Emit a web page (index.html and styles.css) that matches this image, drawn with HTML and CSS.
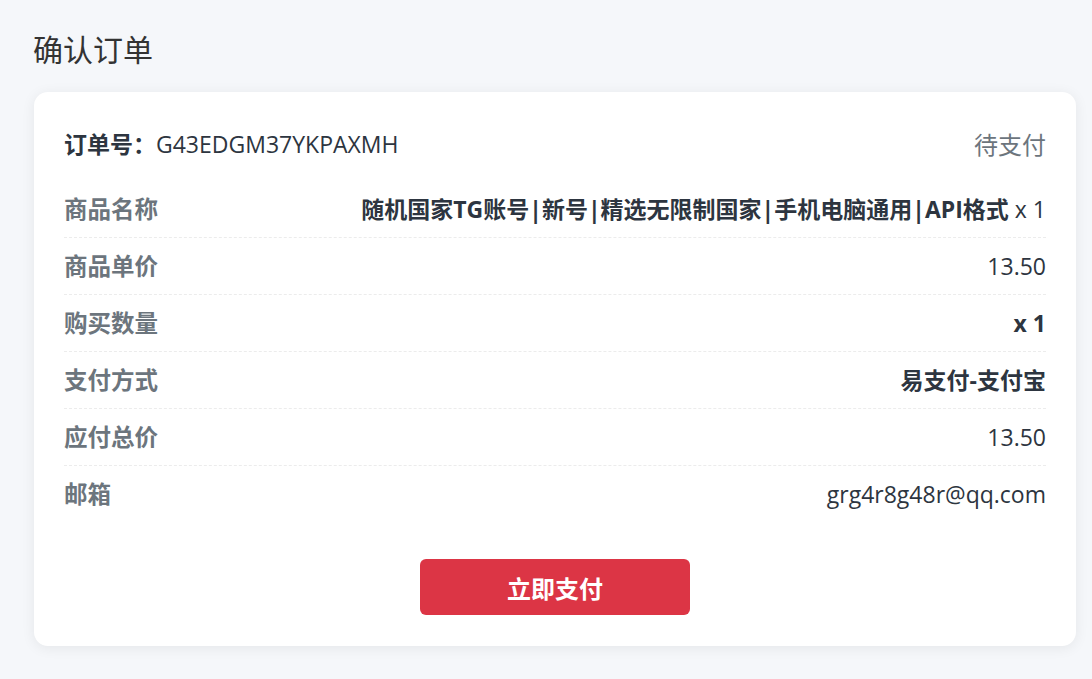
FILE: index.html
```html
<!DOCTYPE html>
<html lang="zh-CN">
<head>
  <meta charset="UTF-8" />
  <meta name="viewport" content="width=device-width, initial-scale=1.0"/>
  <title>确认订单</title>
  <link rel="stylesheet" href="styles.css">
</head>
<body>
  <div class="page">
    <h1 class="page-title">确认订单</h1>

    <div class="order-card">
      <div class="order-head">
        <div class="order-no"><strong>订单号：</strong>G43EDGM37YKPAXMH</div>
        <div class="order-status">待支付</div>
      </div>

      <div class="order-row">
        <span class="label">商品名称</span>
        <span class="value strong">随机国家TG账号|新号|精选无限制国家|手机电脑通用|API格式 <span class="qty">x 1</span></span>
      </div>
      <div class="order-row">
        <span class="label">商品单价</span>
        <span class="value">13.50</span>
      </div>
      <div class="order-row">
        <span class="label">购买数量</span>
        <span class="value strong">x 1</span>
      </div>
      <div class="order-row">
        <span class="label">支付方式</span>
        <span class="value strong">易支付-支付宝</span>
      </div>
      <div class="order-row">
        <span class="label">应付总价</span>
        <span class="value">13.50</span>
      </div>
      <div class="order-row last">
        <span class="label">邮箱</span>
        <span class="value">grg4r8g48r@qq.com</span>
      </div>

      <div class="pay-wrap">
        <button class="pay-btn">立即支付</button>
      </div>
    </div>
  </div>
</body>
</html>
```

FILE: styles.css
```css
body {
  margin: 0;
  background: #f5f7fa;
  font-family: "Open Sans", "Noto Sans CJK SC", sans-serif;
  color: #343a40;
}
.page {
  padding: 30px 16px 34px 34px;
}
.page-title {
  margin: 0 0 22px -1px;
  font-size: 30px;
  line-height: 40px;
  font-weight: 400;
  color: #333;
}
.order-card {
  background: #fff;
  border-radius: 14px;
  box-shadow: 0 2px 14px rgba(0, 0, 0, 0.07);
  padding: 30px 30px 31px;
}
.order-head {
  display: flex;
  justify-content: space-between;
  align-items: center;
  height: 42px;
  margin-bottom: 17px;
}
.order-no {
  font-size: 23px;
  color: #2d3540;
}
.order-no strong {
  font-weight: 700;
}
.order-status {
  font-size: 24px;
  color: #6c757d;
}
.order-row {
  display: flex;
  justify-content: space-between;
  align-items: center;
  padding: 12px 0;
  line-height: 32px;
  border-bottom: 1px dashed #ececec;
}
.order-row.last {
  border-bottom: none;
}
.label {
  font-size: 23.5px;
  font-weight: 700;
  color: #6c757d;
}
.value {
  font-size: 23px;
  color: #2d3540;
}
.value.strong {
  font-weight: 700;
}
.qty {
  font-weight: 400;
}
.pay-wrap {
  display: flex;
  justify-content: center;
  margin-top: 37px;
}
.pay-btn {
  width: 270px;
  height: 56px;
  border: none;
  border-radius: 6px;
  background: #dc3545;
  color: #fff;
  font-family: inherit;
  font-size: 24px;
  font-weight: 700;
  cursor: pointer;
}
```
